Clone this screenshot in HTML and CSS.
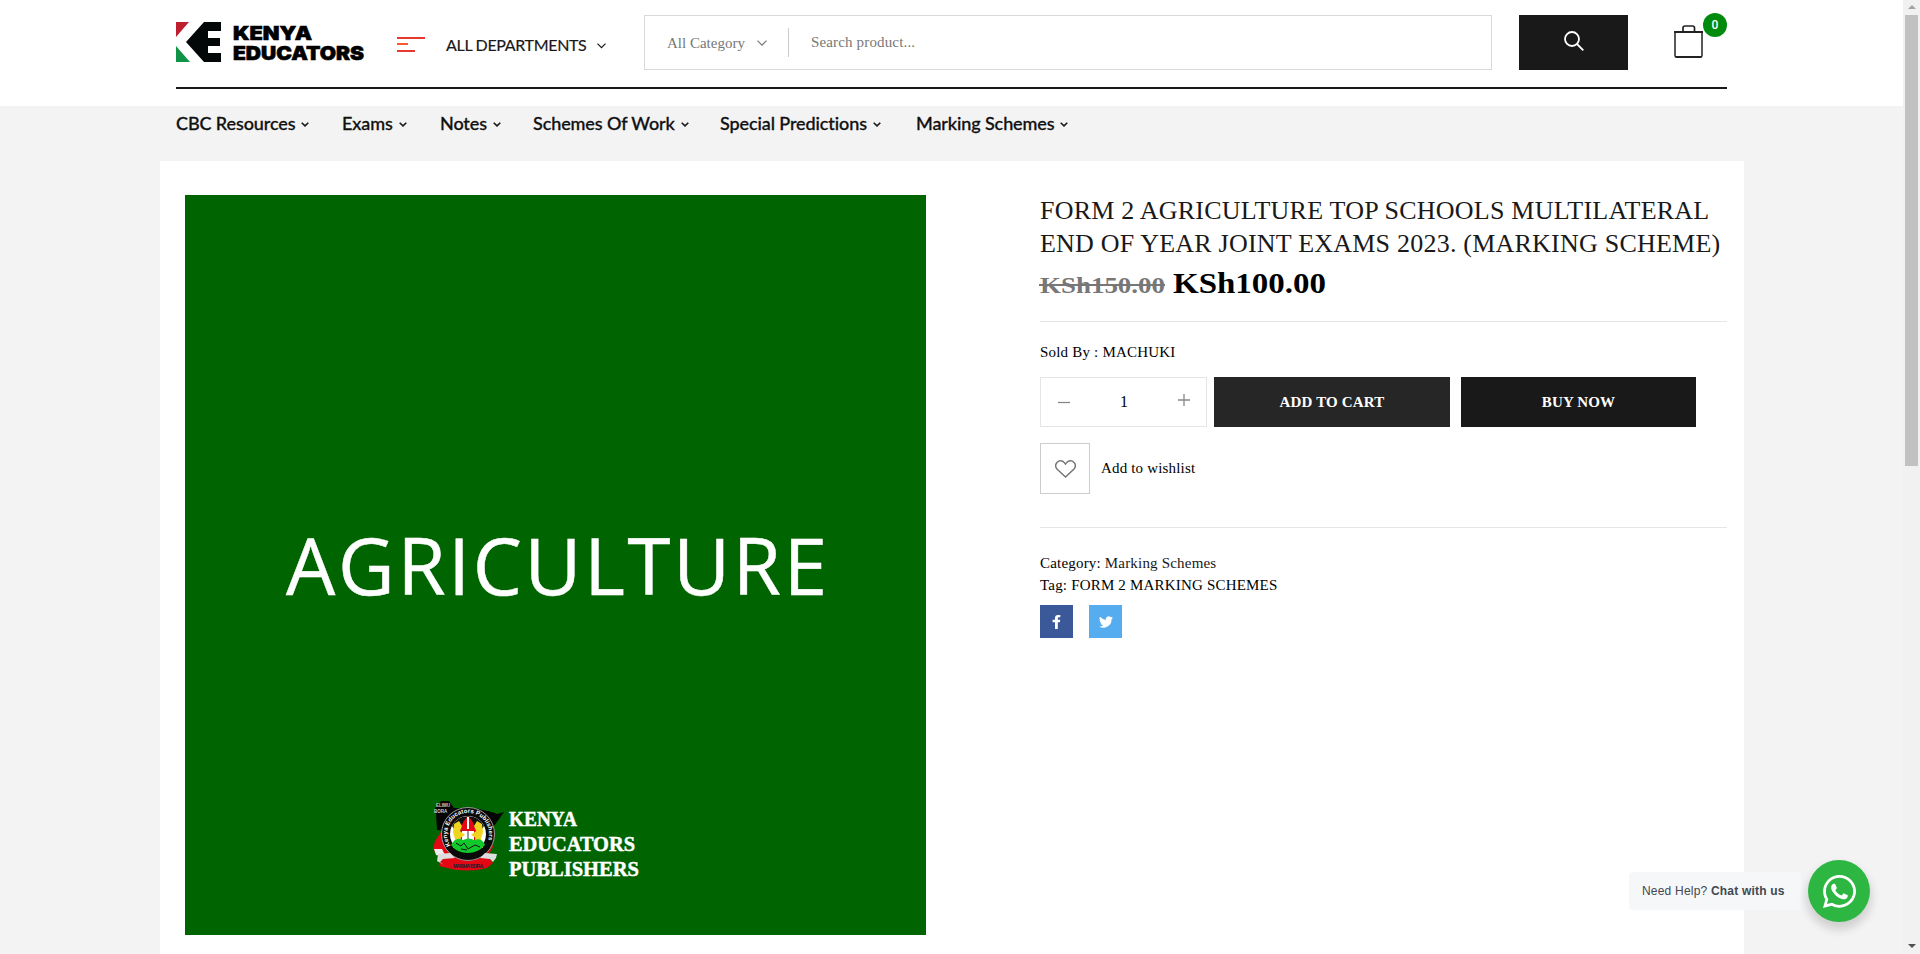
FILE: index.html
```html
<!DOCTYPE html>
<html lang="en">
<head>
<meta charset="utf-8">
<title>Kenya Educators</title>
<link rel="stylesheet" href="styles.css">
</head>
<body>
<div class="page">
  <header class="header">
    <div class="bar">
      <a class="logo">
        <svg class="logo-mark" width="45" height="40" viewBox="0 0 45 40">
          <path fill="#be1e2d" d="M0 0h13L0 15z"/>
          <path fill="#109347" d="M0 24l14 16H0z"/>
          <path fill="#040707" d="M28 0h17v9H32v7h12v8H32v7h13v9H28L10 20z"/>
        </svg>
        <svg class="logo-name" width="132" height="40" viewBox="0 0 132 40">
          <text class="logo-text" x="0" y="18" textLength="79" lengthAdjust="spacingAndGlyphs">KENYA</text>
          <text class="logo-text" x="0" y="38" textLength="131" lengthAdjust="spacingAndGlyphs">EDUCATORS</text>
        </svg>
      </a>
      <div class="departments">
        <svg width="28" height="15" viewBox="0 0 28 15"><path fill="#e63a2e" d="M0 0h28v2H0zM0 13h18v2H0z"/><path fill="#f4592f" d="M0 6h11v2H0z"/></svg>
        <span class="dep-label">ALL DEPARTMENTS</span>
        <svg class="dep-chev" width="9" height="6" viewBox="0 0 9 6" fill="none" stroke="#191919" stroke-width="1.2"><path d="M.5 .7l4 4 4-4"/></svg>
      </div>
      <div class="search">
        <span class="cat">All Category</span>
        <svg width="10" height="6" viewBox="0 0 10 6" fill="none" stroke="#777" stroke-width="1.2"><path d="M.5 .7L5 5.200L9.500 .7"/></svg>
        <i class="split"></i>
        <span class="hint">Search product...</span>
      </div>
      <button class="search-btn">
        <svg width="20" height="20" viewBox="0 0 20 20" fill="none" stroke="#fff" stroke-width="1.800"><circle cx="8" cy="8" r="7"/><path d="M13 13l6.300 6.300"/></svg>
      </button>
      <div class="bag">
        <svg width="29" height="33" viewBox="0 0 29 33" fill="none" stroke="#222"><path stroke-width="1.500" d="M1 7v23.500q0 1.500 1.500 1.500h24q1.500 0 1.500-1.500V7"/><path stroke-width="2" d="M0 7h29M1.500 32h26"/><path stroke-width="1.700" d="M9 7V3q0-2 2-2h7.500q2 0 2 2v4"/></svg>
        <span class="badge">0</span>
      </div>
    </div>
  </header>
  <nav class="nav">
    <a class="n1">CBC Resources<svg class="chev" viewBox="0 0 8 5"><path d="M.7 .7L4 3.900L7.300 .7"/></svg></a>
    <a class="n2">Exams<svg class="chev" viewBox="0 0 8 5"><path d="M.7 .7L4 3.900L7.300 .7"/></svg></a>
    <a class="n3">Notes<svg class="chev" viewBox="0 0 8 5"><path d="M.7 .7L4 3.900L7.300 .7"/></svg></a>
    <a class="n4">Schemes Of Work<svg class="chev" viewBox="0 0 8 5"><path d="M.7 .7L4 3.900L7.300 .7"/></svg></a>
    <a class="n5">Special Predictions<svg class="chev" viewBox="0 0 8 5"><path d="M.7 .7L4 3.900L7.300 .7"/></svg></a>
    <a class="n6">Marking Schemes<svg class="chev" viewBox="0 0 8 5"><path d="M.7 .7L4 3.900L7.300 .7"/></svg></a>
  </nav>
  <main class="panel">
    <svg class="cover" width="741" height="740" viewBox="0 0 741 740">
      <rect width="741" height="740" fill="#006400"/>
      <text class="cover-title" x="101" y="400" textLength="541">AGRICULTURE</text>
      <g transform="translate(245 604)">
        <path fill="#050505" d="M5 9l6-7h8l5 7 21 0 12 3 3 0-5 17-14 6-34-4-1-16z"/>
        <path fill="#050505" d="M50 14l12-1 5 2 7-2-12 17z"/>
        <path fill="#e30613" d="M11 33l-6 9-2 8 8 12 44 0 8-14-6-16z"/>
        <path fill="#eee" d="M4 50h8l4 8-10-2z"/>
        <circle cx="38" cy="35" r="26.500" fill="#0a0a0a" stroke="#9a9a9a"/>
        <circle cx="38" cy="35" r="18" fill="#fff"/>
        <path fill="#111" d="M22 27a18 18 0 0 1 32 0l-4 6H26z"/>
        <path fill="#e30613" d="M38 17q12 12 6 28H32q-6-16 6-28z"/>
        <path fill="#fff" d="M37 18h2v12h-2zM32 32h12v9H32z"/>
        <path stroke="#333" d="M38 32v9"/>
        <path fill="#efd51d" d="M24 25l5-3 3 5-2 5 5 4-5 3 1 9-8 1 2-9-2-7zM52 25l-5-3-3 5 2 5-5 4 5 3-1 9 8 1-2-9 2-7z"/>
        <path fill="#12c92c" d="M21 46q5-9 12-5 6-3 11 0 8-3 11 5-7 8-17 8-11 0-17-8z"/>
        <path fill="none" stroke="#111" d="M26 44l5 3 3-3 4 6 7-4 5 2M31 50l6 1"/>
        <path id="ring" fill="none" d="M20.500 46.500A21 21 0 1 1 55.500 46.500"/>
        <text class="ring-text"><textPath href="#ring" textLength="84">Kenya Educators Publishers</textPath></text>
        <path fill="#e30613" d="M12 58q26 8 46 0l5 6-6 5q-20 5-40 0l-8-2z"/>
        <path fill="#ddd" d="M8 55l12-1 5 5-12 1-3 3 4 3-7-4zM67 55l-12-1-5 5 10 1 3 3 3-4z"/>
        <text class="ribbon" x="23" y="68.500" textLength="30">MAISHA BORA</text>
        <text class="elimu" x="6" y="7.500">ELIMU</text>
        <text class="elimu" x="4" y="14">BORA</text>
      </g>
      <text class="pub" x="324" y="631" textLength="68" lengthAdjust="spacingAndGlyphs">KENYA</text>
      <text class="pub" x="324" y="656" textLength="126" lengthAdjust="spacingAndGlyphs">EDUCATORS</text>
      <text class="pub" x="324" y="681" textLength="130" lengthAdjust="spacingAndGlyphs">PUBLISHERS</text>
    </svg>
    <section class="details">
      <h1 class="title">FORM 2 AGRICULTURE TOP SCHOOLS MULTILATERAL<br>END OF YEAR JOINT EXAMS 2023. (MARKING SCHEME)</h1>
      <svg class="price" width="300" height="35" viewBox="0 0 300 35">
        <text class="old" x="0" y="27" textLength="125" lengthAdjust="spacingAndGlyphs">KSh150.00</text>
        <path stroke="#777" stroke-width="2" d="M-1 19h126"/>
        <text class="new" x="133" y="27" textLength="153" lengthAdjust="spacingAndGlyphs">KSh100.00</text>
      </svg>
      <p class="sold">Sold By : MACHUKI</p>
      <div class="buy">
        <div class="qty">
          <svg width="12" height="12" viewBox="0 0 12 12" stroke="#888" stroke-width="1.300"><path d="M0 6.500h12"/></svg>
          <span>1</span>
          <svg class="plus" width="12" height="12" viewBox="0 0 12 12" stroke="#888" stroke-width="1.300"><path d="M0 6h12M6 0v12"/></svg>
        </div>
        <button class="btn cart">ADD TO CART</button>
        <button class="btn now">BUY NOW</button>
      </div>
      <div class="wish">
        <span class="heart"><svg width="21" height="18" viewBox="0 0 21 18" fill="none" stroke="#777" stroke-width="1.500"><path d="M10.500 17L2.200 9.200C.4 7.200.3 4.300 2 2.400c2-2.200 5.500-2 7.300.2l1.200 1.500 1.200-1.500C13.500.4 17 .2 19 2.400c1.700 1.900 1.600 4.800-.2 6.800z"/></svg></span>
        <span>Add to wishlist</span>
      </div>
      <div class="meta">
        <p>Category: <span class="cat-link">Marking Schemes</span></p>
        <p>Tag: FORM 2 MARKING SCHEMES</p>
      </div>
      <div class="share">
        <a class="fb"><svg width="9" height="14" viewBox="0 0 9 14" fill="#fff"><path d="M8.300 0v2.300H6.900q-1.100 0-1.100 1v1.500h2.400L7.900 7.200H5.800V14H3V7.200H.6V4.800H3V3Q3 0 6 0z"/></svg></a>
        <a class="tw"><svg width="14" height="12" viewBox="0 0 24 20" fill="#fff"><path d="M24 2.600a10 10 0 0 1-2.800.8A5 5 0 0 0 23.300.7a10 10 0 0 1-3.100 1.200 4.900 4.900 0 0 0-8.400 4.500A14 14 0 0 1 1.700 1.200a4.900 4.900 0 0 0 1.500 6.600A5 5 0 0 1 1 7.200a4.900 4.900 0 0 0 3.900 4.900 5 5 0 0 1-2.200.1 4.900 4.900 0 0 0 4.600 3.400A10 10 0 0 1 0 17.600 14 14 0 0 0 21.500 5.100 10 10 0 0 0 24 2.600z"/></svg></a>
      </div>
    </section>
  </main>
</div>
<div class="chat">
  <div class="chat-label">Need Help? <b>Chat with us</b></div>
  <div class="chat-btn">
    <svg width="33" height="33" viewBox="0 0 448 448" fill="#fff"><path d="M380.900 65.100C339 23.100 283.200 0 223.900 0 101.500 0 1.900 99.600 1.900 222c0 39.100 10.200 77.300 29.600 111L0 448l117.700-30.900c32.400 17.700 68.900 27 106.100 27h.1c122.300 0 224.100-99.600 224.100-222 0-59.300-25.200-115-67.100-157zM223.900 406.700c-33.200 0-65.700-8.900-94-25.700l-6.700-4-69.800 18.300L72 327.200l-4.400-7c-18.500-29.400-28.200-63.300-28.200-98.200 0-101.700 82.800-184.500 184.600-184.500 49.300 0 95.600 19.200 130.400 54.100s56.200 81.200 56.100 130.500c0 101.800-84.900 184.600-186.600 184.600zm101.200-138.200c-5.500-2.800-32.800-16.200-37.900-18-5.100-1.900-8.800-2.800-12.500 2.800s-14.300 18-17.600 21.800c-3.200 3.700-6.500 4.200-12 1.400-32.600-16.300-54-29.100-75.500-66-5.700-9.800 5.700-9.100 16.300-30.300 1.800-3.700.9-6.900-.5-9.700s-12.500-30.100-17.100-41.200c-4.500-10.800-9.100-9.300-12.500-9.500-3.200-.2-6.900-.2-10.600-.2s-9.700 1.400-14.800 6.900c-5.100 5.600-19.400 19-19.400 46.300s19.900 53.700 22.600 57.400c2.800 3.700 39.100 59.700 94.800 83.800 35.200 15.200 49 16.500 66.600 13.900 10.700-1.600 32.800-13.400 37.400-26.400s4.600-24.100 3.200-26.400c-1.300-2.500-5-3.900-10.500-6.600z"/></svg>
  </div>
</div>
<div class="scroll"><i class="up"></i><i class="thumb"></i><i class="down"></i></div>
</body>
</html>
```
FILE: styles.css
```css
* { box-sizing: border-box; }
body { margin: 0; height: 954px; overflow: hidden; display: flex; background: #f3f3f3; font-family: "Liberation Serif", serif; color: #000; }
p, h1 { margin: 0; font-weight: 400; }
button { border: 0; padding: 0; font: inherit; color: #fff; }
svg { flex: none; }
.page { width: 1903px; height: 954px; overflow: hidden; }
.header { height: 106px; background: #fff; padding: 0 176px; }
.bar { height: 89px; padding-top: 15px; border-bottom: 2px solid #191919; display: flex; align-items: flex-start; }
.logo { display: flex; gap: 12px; margin-top: 7px; width: 221px; }
.logo-name { overflow: visible; }
.logo-text { font: 900 19px Inter, sans-serif; stroke: #000; stroke-width: .6px; }
.departments { display: flex; align-items: center; width: 247px; height: 30px; margin-top: 14px; }
.dep-label { font: 16px Lato, sans-serif; letter-spacing: -.33px; color: #191919; margin: 0 11px 0 21px; white-space: nowrap; -webkit-text-stroke: .2px #191919; }
.dep-chev { margin-top: 3px; }
.search { width: 848px; height: 55px; border: 1px solid #d9d9d9; display: flex; align-items: center; padding-left: 22px; font-size: 15px; color: #777; }
.cat { width: 80px; margin: 1px 10px 0 0; white-space: nowrap; }
.hint { letter-spacing: .15px; margin-bottom: 1px; }
.split { width: 1px; height: 29px; background: #ccc; margin: 0 22px 0 21px; }
.search-btn { width: 109px; height: 55px; margin-left: 27px; background: #191919; display: flex; align-items: center; justify-content: center; }
.search-btn svg { margin-bottom: 4px; }
.bag { position: relative; margin: 10px 0 0 46px; }
.badge { position: absolute; left: 29px; top: -12px; width: 24px; height: 24px; border-radius: 50%; background: #008a0e; color: #fff; font: 500 12px/24px Roboto, sans-serif; text-align: center; }
.nav { height: 55px; padding: 6px 0 0 176px; display: flex; font: 500 18px/22px Lato, sans-serif; letter-spacing: -.1px; color: #111; -webkit-text-stroke: .3px #111; }
.nav a { white-space: nowrap; }
.chev { width: 8px; height: 5px; margin: 0 0 3px 6px; fill: none; stroke: #191919; stroke-width: 1.6; }
.n1 { width: 166px; } .n2 { width: 98px; } .n3 { width: 93px; } .n4 { width: 187px; } .n5 { width: 196px; }
.panel { margin-left: 160px; width: 1584px; height: 793px; background: #fff; padding: 34px 17px 0 25px; display: flex; justify-content: space-between; }
.cover-title { font: 78px "Open Sans", sans-serif; fill: #fff; stroke: #fff; stroke-width: .5px; }
.pub { font: 700 22px "Liberation Serif", serif; fill: #fff; stroke: #fff; stroke-width: .5px; }
.ring-text { font: 700 6px "Liberation Sans", sans-serif; fill: #fff; }
.ribbon { font: 700 5px "Liberation Sans", sans-serif; fill: #123; }
.elimu { font: 700 4.5px "Liberation Sans", sans-serif; fill: #ccc; }
.details { width: 687px; margin-top: -1px; }
.title { font-size: 26px; line-height: 33px; letter-spacing: .22px; color: #191919; white-space: nowrap; }
.price { display: block; margin-top: 6px; overflow: visible; }
.old { font: 700 24px "Liberation Serif", serif; fill: #777; }
.new { font: 700 29px "Liberation Serif", serif; fill: #000; }
.sold { margin-top: 20px; padding-top: 20px; border-top: 1px solid #e5e5e5; font-size: 15px; line-height: 20px; letter-spacing: .2px; }
.buy { display: flex; margin-top: 15px; }
.qty { width: 167px; height: 50px; border: 1px solid #e5e5e5; display: flex; align-items: center; justify-content: space-between; padding: 0 16px 0 17px; font-size: 16px; }
.plus { margin-bottom: 4px; }
.btn { height: 50px; font-size: 15px; font-weight: 700; letter-spacing: .15px; }
.cart { width: 236px; margin: 0 11px 0 7px; background: #262626; }
.now { width: 235px; background: #191919; }
.wish { display: flex; align-items: center; gap: 11px; margin-top: 16px; font-size: 15px; letter-spacing: .17px; }
.heart { width: 50px; height: 51px; border: 1px solid #ccc; display: flex; align-items: center; justify-content: center; }
.meta { border-top: 1px solid #e5e5e5; margin-top: 33px; padding-top: 24px; font-size: 15px; line-height: 22px; letter-spacing: .19px; }
.cat-link { color: #191919; }
.share { display: flex; gap: 16px; margin-top: 9px; }
.share a { width: 33px; height: 33px; display: flex; align-items: center; justify-content: center; }
.fb { background: #3b5998; }
.tw { background: #55acee; }
.chat { position: absolute; left: 1629px; top: 860px; display: flex; align-items: center; gap: 7px; }
.chat-label { width: 172px; height: 38px; border-radius: 4px; background: #f5f7f9; color: #43474e; font: 12px/38px "Liberation Sans", sans-serif; letter-spacing: .2px; padding-left: 13px; white-space: nowrap; }
.chat-btn { width: 62px; height: 62px; padding: 1px 0 0 1px; border-radius: 50%; background: #2db742; box-shadow: 0 6px 8px 2px rgba(0,0,0,.14); display: flex; align-items: center; justify-content: center; }
.scroll { width: 17px; height: 954px; background: #f1f1f1; display: flex; flex-direction: column; align-items: center; }
.up { border: 4px solid transparent; border-top: 0; border-bottom-color: #a3a3a3; margin: 5px 0 6px; }
.thumb { width: 13px; height: 451px; background: #c1c1c1; }
.down { border: 4px solid transparent; border-bottom: 0; border-top-color: #505050; margin: auto 0 6px; }
```
